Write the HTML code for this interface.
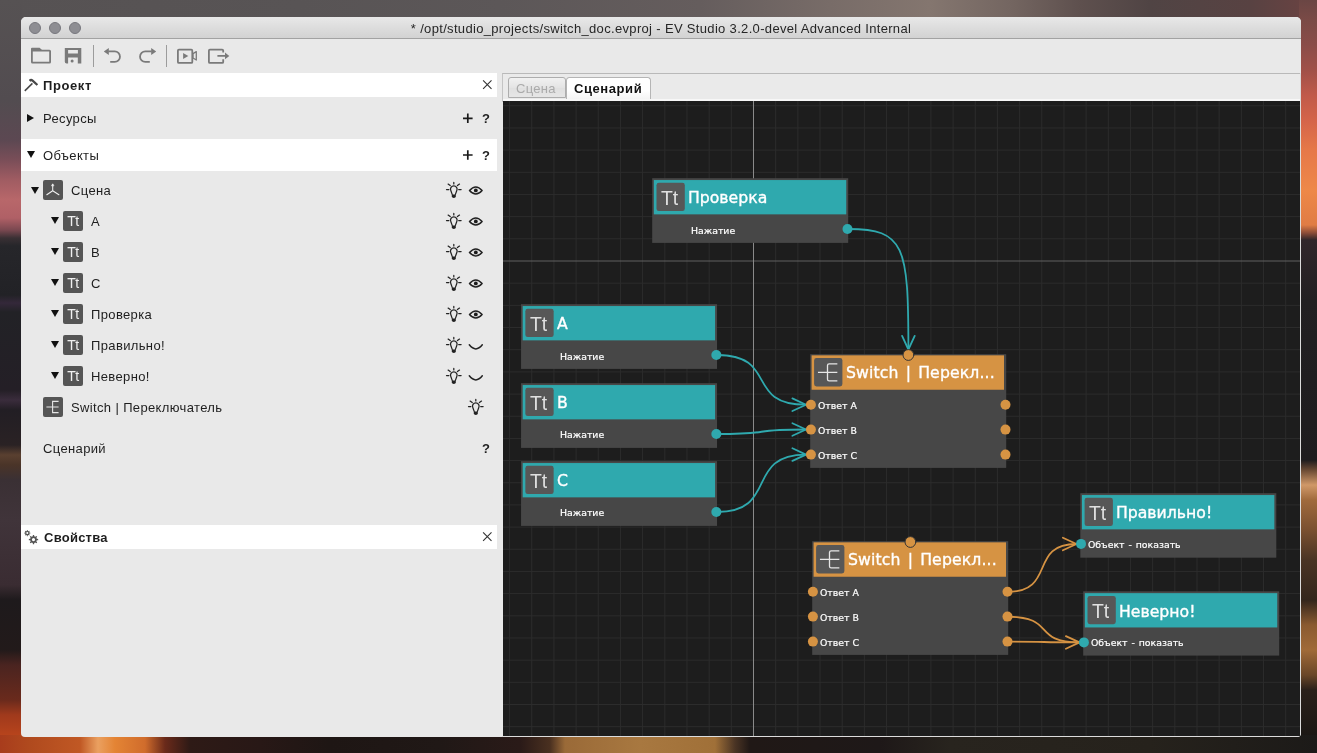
<!DOCTYPE html>
<html lang="ru">
<head>
<meta charset="utf-8">
<title>EV Studio</title>
<style>
*{box-sizing:border-box;margin:0;padding:0}
html,body{width:1317px;height:753px;overflow:hidden}
body{position:relative;font-family:"Liberation Sans",sans-serif;color:#1e1e1e;background:#2a1c1a}
.abs,#win *{position:absolute}
#bg-top{left:0;top:0;width:1317px;height:18px;background:linear-gradient(90deg,#565253 0,#585455 300px,#5c5758 500px,#655d5d 700px,#786c68 830px,#84766f 930px,#746661 1010px,#5e504e 1080px,#504444 1150px,#584242 1250px,#6c4342 1317px)}
#bg-left{left:0;top:0;width:22px;height:753px;background:linear-gradient(180deg,#565253 0,#524c50 100px,#5c4852 140px,#7a4e58 160px,#a05c62 180px,#b8676a 200px,#b06066 218px,#7a4850 230px,#3a3034 238px,#26262a 246px,#222226 295px,#34283a 303px,#222226 312px,#241f26 390px,#3a2c3c 400px,#221e24 410px,#2a2224 445px,#5a4030 455px,#4a3428 465px,#3a3034 480px,#40343a 520px,#3a2c32 585px,#1e1a1c 600px,#221a1a 650px,#4a2420 665px,#6a2a1c 700px,#a03a1c 715px,#b8441c 736px,#a84018 753px)}
#bg-right{left:1299px;top:0;width:18px;height:753px;background:linear-gradient(180deg,#6a4644 0,#7a4a46 20px,#8a4c48 45px,#a05048 70px,#c05a4a 95px,#d4644a 120px,#e67848 150px,#ee8848 190px,#e07c44 225px,#8a4c38 233px,#30262a 240px,#222022 300px,#1e1c1e 460px,#6a4a34 470px,#d09868 485px,#a06a3c 500px,#7a5030 530px,#4a3424 560px,#34261c 600px,#8a5a30 625px,#a06a38 650px,#6a4628 675px,#2a201a 690px,#161412 753px)}
#bg-bot{left:0;top:735px;width:1317px;height:18px;background:linear-gradient(90deg,#a83c1c 0,#b04a1e 30px,#c05824 80px,#eaa060 98px,#e48434 115px,#d06c2c 145px,#6a2a1a 165px,#2e1a16 190px,#281816 260px,#1e1614 330px,#201816 440px,#2a1a18 520px,#4a3020 550px,#9a6a38 565px,#a87840 640px,#a07038 715px,#4a3424 735px,#201816 750px,#1e1818 880px,#28241e 950px,#26221c 1150px,#1c1a18 1317px)}
#win{left:21px;top:17px;width:1280px;height:720px;background:#e9e9e9;border-radius:5px 5px 4px 4px;overflow:hidden}
#titlebar{left:0;top:0;width:1280px;height:22px;background:linear-gradient(180deg,#e8e8e8 0,#d2d2d2 100%);border-bottom:1px solid #a2a2a2}
#title,.lbl,.nt,.pl,.ico span,.nic{will-change:transform}
#title{left:0;top:1px;width:1280px;height:21px;line-height:22px;text-align:center;font-size:13px;letter-spacing:.33px;color:#262626;white-space:nowrap}
.tl{width:12px;height:12px;border-radius:50%;background:#8e8e93;border:1px solid #77777d;top:5px}
.tbi{top:0;left:0}
.band{left:0;width:476px;background:#fff}
.lbl{font-size:13px;line-height:16px;white-space:nowrap;color:#1e1e1e;letter-spacing:.36px}
.b{font-weight:bold;letter-spacing:.6px}
.ico{width:20px;height:20px;background:#555;border-radius:2px}
.ico span{left:0;top:0;width:20px;height:20px;line-height:20px;text-align:center;color:#f0f0f0;font-size:14px;letter-spacing:-.5px}
.tri{width:0;height:0;border-left:4px solid transparent;border-right:4px solid transparent;border-top:7px solid #111}
.trir{width:0;height:0;border-top:4.2px solid transparent;border-bottom:4.2px solid transparent;border-left:7.2px solid #111}
#canvas{left:482px;top:84px;width:797px;height:635px;background:#1d1d1d;overflow:hidden}
.node{width:196px}
.hd{left:1.9px;top:2px;width:192.2px;height:34.3px}
.teal{background:#2fa9ae}
.org{background:#d69343}
.nic{line-height:28px;height:28px;white-space:nowrap;color:#e0e0e0;font-size:19.4px;font-family:"Liberation Sans",sans-serif;letter-spacing:0;will-change:transform}
.nt{left:35.6px;-webkit-text-stroke:.35px #fff;height:24px;line-height:24px;font-family:"DejaVu Sans","Liberation Sans",sans-serif;font-size:15.7px;word-spacing:2px;color:#fff;white-space:nowrap}
.pl{font-family:"DejaVu Sans","Liberation Sans",sans-serif;font-size:9.35px;line-height:12px;color:#fff;-webkit-text-stroke:.2px #fff;white-space:nowrap}
.port{width:10px;height:10px;border-radius:50%}
</style>
</head>
<body>
<div id="bg-top" class="abs"></div><div id="bg-left" class="abs"></div><div id="bg-right" class="abs"></div><div id="bg-bot" class="abs"></div>
<div id="win" class="abs">
<div id="titlebar"></div>
<div class="tl" style="left:8px"></div>
<div class="tl" style="left:28px"></div>
<div class="tl" style="left:48px"></div>
<div id="title">* /opt/studio_projects/switch_doc.evproj - EV Studio 3.2.0-devel Advanced Internal</div>
<svg class="tbi" style="left:0;top:22px" width="300" height="34" viewBox="21 39 300 34" fill="none" stroke="#7a7a7a" stroke-width="1.8" stroke-linejoin="round" stroke-linecap="butt"><rect x="31.9" y="50.7" width="18.2" height="12" rx=".6"/><path d="M31 51 V48.7 Q31 47.7 32 47.7 H39.6 L42 50 Z" fill="#7a7a7a" stroke="none"/><path d="M64.8 48 H81.3 V63.6 H77.8 V57.6 H68.1 V63.6 H66.6 Q64.8 63.6 64.8 61.8 Z M68.1 50 V53.4 H77.9 V50 Z" fill="#7a7a7a" stroke="none" fill-rule="evenodd"/><circle cx="72.1" cy="60.9" r="1.5" fill="#7a7a7a" stroke="none"/><path d="M93.5 45 V67 M166.5 45 V67" stroke="#9c9c9c" stroke-width="1"/><path d="M108.3 51.4 H114.7 A5.25 5.25 0 0 1 114.7 61.9 H110.2"/><path d="M108.8 47.9 L103.8 51.4 L108.8 54.9 Z" fill="#7a7a7a" stroke="none"/><path d="M151.7 51.4 H145.3 A5.25 5.25 0 0 0 145.3 61.9 H149.8"/><path d="M151.2 47.9 L156.2 51.4 L151.2 54.9 Z" fill="#7a7a7a" stroke="none"/><rect x="177.9" y="49.7" width="14.4" height="13.2" rx="1"/><path d="M193 53.6 L196.3 51.6 V60 L193 58 Z" stroke-width="1.3"/><path d="M183.1 52.9 L188.3 56 L183.1 59.1 Z" fill="#7a7a7a" stroke="none"/><path d="M223.2 52.6 V50.7 Q223.2 49.7 222.2 49.7 H209.9 Q208.9 49.7 208.9 50.7 V61.9 Q208.9 62.9 209.9 62.9 H222.2 Q223.2 62.9 223.2 61.9 V59.3"/><path d="M217.4 55.9 H225.4"/><path d="M225 52.5 L229.3 55.9 L225 59.3 Z" fill="#7a7a7a" stroke="none"/></svg>
<div class="band" style="top:56px;height:24px"></div><div class="band" style="top:122px;height:32px"></div><div class="band" style="top:508px;height:24px"></div><svg style="left:0;top:56px" width="480" height="500" viewBox="21 73 480 500"><g fill="none" stroke="#484848" stroke-linecap="butt"><path d="M24.8 90.9 L32.4 83.4" stroke-width="1.5"/><path d="M29.6 80.9 Q31 79.4 32.6 80.6 L37.4 85" stroke-width="2.3"/></g><path d="M483.1 80.4 l8.4 8.4 m0 -8.4 l-8.4 8.4" stroke="#333" stroke-width="1.1" fill="none"/><path d="M483.1 532.4 l8.4 8.4 m0 -8.4 l-8.4 8.4" stroke="#333" stroke-width="1.1" fill="none"/><path d="M463 118.3 h9.6 M467.8 113.5 v9.6" stroke="#1a1a1a" stroke-width="1.7" fill="none"/><path d="M463 155.0 h9.6 M467.8 150.2 v9.6" stroke="#1a1a1a" stroke-width="1.7" fill="none"/><path d="M29.45 532.62 L30.38 532.71 L30.38 533.49 L29.45 533.58 L29.16 534.28 L29.75 535.00 L29.20 535.55 L28.48 534.96 L27.78 535.25 L27.69 536.18 L26.91 536.18 L26.82 535.25 L26.12 534.96 L25.40 535.55 L24.85 535.00 L25.44 534.28 L25.15 533.58 L24.22 533.49 L24.22 532.71 L25.15 532.62 L25.44 531.92 L24.85 531.20 L25.40 530.65 L26.12 531.24 L26.82 530.95 L26.91 530.02 L27.69 530.02 L27.78 530.95 L28.48 531.24 L29.20 530.65 L29.75 531.20 L29.16 531.92 Z M26.30 533.10 a1.00 1.00 0 1 0 2.00 0 a1.00 1.00 0 1 0 -2.00 0 Z" fill="#555" fill-rule="evenodd"/><path d="M36.82 538.86 L38.16 539.01 L38.16 540.19 L36.82 540.34 L36.37 541.42 L37.21 542.48 L36.38 543.31 L35.32 542.47 L34.24 542.92 L34.09 544.26 L32.91 544.26 L32.76 542.92 L31.68 542.47 L30.62 543.31 L29.79 542.48 L30.63 541.42 L30.18 540.34 L28.84 540.19 L28.84 539.01 L30.18 538.86 L30.63 537.78 L29.79 536.72 L30.62 535.89 L31.68 536.73 L32.76 536.28 L32.91 534.94 L34.09 534.94 L34.24 536.28 L35.32 536.73 L36.38 535.89 L37.21 536.72 L36.37 537.78 Z M31.90 539.60 a1.60 1.60 0 1 0 3.20 0 a1.60 1.60 0 1 0 -3.20 0 Z" fill="#555" fill-rule="evenodd"/><g transform="translate(453.8 190.0)"><g fill="none" stroke="#222" stroke-width="1.25" stroke-linecap="round"><path d="M-1.6 4.4 L-3 .6 A3.3 3.3 0 1 1 3 .6 L1.6 4.4"/><path d="M-2 4.4 H2 V6.3 Q2 8 0 8 Q-2 8 -2 6.3 Z" fill="#222" stroke="none"/><path d="M0 -7.6 V-6.1 M-5.7 -5.9 L-3.6 -4.4 M5.7 -5.9 L3.6 -4.4 M-7.3 -.5 H-4.9 M4.9 -.5 H7.3"/></g></g><g transform="translate(475.8 190.0)"><g fill="none" stroke="#222" stroke-width="1.5" stroke-linejoin="round"><path d="M-6.3 .45 Q0 -6.7 6.3 .45 Q0 7.6 -6.3 .45 Z"/><circle cx="0" cy=".45" r="1.9" fill="#1c1c1c" stroke="none"/></g></g><g transform="translate(453.8 221.0)"><g fill="none" stroke="#222" stroke-width="1.25" stroke-linecap="round"><path d="M-1.6 4.4 L-3 .6 A3.3 3.3 0 1 1 3 .6 L1.6 4.4"/><path d="M-2 4.4 H2 V6.3 Q2 8 0 8 Q-2 8 -2 6.3 Z" fill="#222" stroke="none"/><path d="M0 -7.6 V-6.1 M-5.7 -5.9 L-3.6 -4.4 M5.7 -5.9 L3.6 -4.4 M-7.3 -.5 H-4.9 M4.9 -.5 H7.3"/></g></g><g transform="translate(475.8 221.0)"><g fill="none" stroke="#222" stroke-width="1.5" stroke-linejoin="round"><path d="M-6.3 .45 Q0 -6.7 6.3 .45 Q0 7.6 -6.3 .45 Z"/><circle cx="0" cy=".45" r="1.9" fill="#1c1c1c" stroke="none"/></g></g><g transform="translate(453.8 252.0)"><g fill="none" stroke="#222" stroke-width="1.25" stroke-linecap="round"><path d="M-1.6 4.4 L-3 .6 A3.3 3.3 0 1 1 3 .6 L1.6 4.4"/><path d="M-2 4.4 H2 V6.3 Q2 8 0 8 Q-2 8 -2 6.3 Z" fill="#222" stroke="none"/><path d="M0 -7.6 V-6.1 M-5.7 -5.9 L-3.6 -4.4 M5.7 -5.9 L3.6 -4.4 M-7.3 -.5 H-4.9 M4.9 -.5 H7.3"/></g></g><g transform="translate(475.8 252.0)"><g fill="none" stroke="#222" stroke-width="1.5" stroke-linejoin="round"><path d="M-6.3 .45 Q0 -6.7 6.3 .45 Q0 7.6 -6.3 .45 Z"/><circle cx="0" cy=".45" r="1.9" fill="#1c1c1c" stroke="none"/></g></g><g transform="translate(453.8 283.0)"><g fill="none" stroke="#222" stroke-width="1.25" stroke-linecap="round"><path d="M-1.6 4.4 L-3 .6 A3.3 3.3 0 1 1 3 .6 L1.6 4.4"/><path d="M-2 4.4 H2 V6.3 Q2 8 0 8 Q-2 8 -2 6.3 Z" fill="#222" stroke="none"/><path d="M0 -7.6 V-6.1 M-5.7 -5.9 L-3.6 -4.4 M5.7 -5.9 L3.6 -4.4 M-7.3 -.5 H-4.9 M4.9 -.5 H7.3"/></g></g><g transform="translate(475.8 283.0)"><g fill="none" stroke="#222" stroke-width="1.5" stroke-linejoin="round"><path d="M-6.3 .45 Q0 -6.7 6.3 .45 Q0 7.6 -6.3 .45 Z"/><circle cx="0" cy=".45" r="1.9" fill="#1c1c1c" stroke="none"/></g></g><g transform="translate(453.8 314.0)"><g fill="none" stroke="#222" stroke-width="1.25" stroke-linecap="round"><path d="M-1.6 4.4 L-3 .6 A3.3 3.3 0 1 1 3 .6 L1.6 4.4"/><path d="M-2 4.4 H2 V6.3 Q2 8 0 8 Q-2 8 -2 6.3 Z" fill="#222" stroke="none"/><path d="M0 -7.6 V-6.1 M-5.7 -5.9 L-3.6 -4.4 M5.7 -5.9 L3.6 -4.4 M-7.3 -.5 H-4.9 M4.9 -.5 H7.3"/></g></g><g transform="translate(475.8 314.0)"><g fill="none" stroke="#222" stroke-width="1.5" stroke-linejoin="round"><path d="M-6.3 .45 Q0 -6.7 6.3 .45 Q0 7.6 -6.3 .45 Z"/><circle cx="0" cy=".45" r="1.9" fill="#1c1c1c" stroke="none"/></g></g><g transform="translate(453.8 345.0)"><g fill="none" stroke="#222" stroke-width="1.25" stroke-linecap="round"><path d="M-1.6 4.4 L-3 .6 A3.3 3.3 0 1 1 3 .6 L1.6 4.4"/><path d="M-2 4.4 H2 V6.3 Q2 8 0 8 Q-2 8 -2 6.3 Z" fill="#222" stroke="none"/><path d="M0 -7.6 V-6.1 M-5.7 -5.9 L-3.6 -4.4 M5.7 -5.9 L3.6 -4.4 M-7.3 -.5 H-4.9 M4.9 -.5 H7.3"/></g></g><g transform="translate(475.8 345.0)"><g fill="none" stroke="#222" stroke-width="1.5" stroke-linecap="round"><path d="M-6.5 -.2 Q0 8 6.5 -.2"/></g></g><g transform="translate(453.8 376.0)"><g fill="none" stroke="#222" stroke-width="1.25" stroke-linecap="round"><path d="M-1.6 4.4 L-3 .6 A3.3 3.3 0 1 1 3 .6 L1.6 4.4"/><path d="M-2 4.4 H2 V6.3 Q2 8 0 8 Q-2 8 -2 6.3 Z" fill="#222" stroke="none"/><path d="M0 -7.6 V-6.1 M-5.7 -5.9 L-3.6 -4.4 M5.7 -5.9 L3.6 -4.4 M-7.3 -.5 H-4.9 M4.9 -.5 H7.3"/></g></g><g transform="translate(475.8 376.0)"><g fill="none" stroke="#222" stroke-width="1.5" stroke-linecap="round"><path d="M-6.5 -.2 Q0 8 6.5 -.2"/></g></g><g transform="translate(475.8 407.0)"><g fill="none" stroke="#222" stroke-width="1.25" stroke-linecap="round"><path d="M-1.6 4.4 L-3 .6 A3.3 3.3 0 1 1 3 .6 L1.6 4.4"/><path d="M-2 4.4 H2 V6.3 Q2 8 0 8 Q-2 8 -2 6.3 Z" fill="#222" stroke="none"/><path d="M0 -7.6 V-6.1 M-5.7 -5.9 L-3.6 -4.4 M5.7 -5.9 L3.6 -4.4 M-7.3 -.5 H-4.9 M4.9 -.5 H7.3"/></g></g></svg><div class="lbl b" style="left:22.4px;top:61.0px">Проект</div><div class="lbl" style="left:22.1px;top:94.0px">Ресурсы</div><div class="lbl" style="left:22.1px;top:131.0px">Объекты</div><div class="lbl" style="left:22.1px;top:424.0px">Сценарий</div><div class="lbl b" style="left:22.6px;top:513.0px;letter-spacing:.25px">Свойства</div><div class="lbl b" style="left:461.2px;top:94.0px">?</div><div class="lbl b" style="left:461.2px;top:131.0px">?</div><div class="lbl b" style="left:461.2px;top:424.0px">?</div><div class="trir" style="left:5.9px;top:97.0px"></div><div class="tri" style="left:6.0px;top:134.2px"></div><div class="tri" style="left:10.0px;top:169.8px"></div><div class="ico" style="left:22px;top:163px"><svg width="20" height="20" viewBox="-10 -10 20 20" style="left:0;top:0"><g fill="none" stroke="#f0f0f0" stroke-width="1.05" stroke-linecap="round"><path d="M-.3 .8 V-5.6 M-.3 .8 L-6.2 4.8 M-.3 .8 L5.9 4.8"/><path d="M-1.4 -4.5 L-.3 -6.2 L.8 -4.5 Z" fill="#f0f0f0" stroke-width=".6"/></g></svg></div><div class="lbl" style="left:49.8px;top:165.5px">Сцена</div><div class="tri" style="left:30.0px;top:200.4px"></div><div class="ico" style="left:42px;top:194px"><span>Tt</span></div><div class="lbl" style="left:69.8px;top:196.5px">A</div><div class="tri" style="left:30.0px;top:231.4px"></div><div class="ico" style="left:42px;top:225px"><span>Tt</span></div><div class="lbl" style="left:69.8px;top:227.5px">B</div><div class="tri" style="left:30.0px;top:262.4px"></div><div class="ico" style="left:42px;top:256px"><span>Tt</span></div><div class="lbl" style="left:69.8px;top:258.5px">C</div><div class="tri" style="left:30.0px;top:293.4px"></div><div class="ico" style="left:42px;top:287px"><span>Tt</span></div><div class="lbl" style="left:69.8px;top:289.5px">Проверка</div><div class="tri" style="left:30.0px;top:324.4px"></div><div class="ico" style="left:42px;top:318px"><span>Tt</span></div><div class="lbl" style="left:69.8px;top:320.5px">Правильно!</div><div class="tri" style="left:30.0px;top:355.4px"></div><div class="ico" style="left:42px;top:349px"><span>Tt</span></div><div class="lbl" style="left:69.8px;top:351.5px">Неверно!</div><div class="ico" style="left:22px;top:380px"><svg width="20" height="20" viewBox="-10 -10 20 20" style="left:0;top:0"><g fill="none" stroke="#e6e6e6" stroke-width="1.1" stroke-linecap="butt"><path d="M-6.6 0 H5.6 M5.6 -5.6 H-.4 V5.6 H5.6"/></g></svg></div><div class="lbl" style="left:49.8px;top:382.5px">Switch | Переключатель</div>
<div style="left:481px;top:56px;width:799px;height:29px;background:#eaeaea;border-top:1px solid #b9b9b9;border-left:1px solid #c4c4c4"></div><div style="left:482px;top:81.5px;width:797px;height:2.5px;background:#f7f7f7"></div><div style="left:487.3px;top:60.3px;width:58.2px;height:20.4px;border:1px solid #adadad;border-radius:3px 3px 0 0;background:linear-gradient(180deg,#f1f1f1 0,#e4e4e4 50%,#e0e0e0 55%,#e6e6e6 100%)"></div><div class="lbl" style="left:494.7px;top:63.5px;color:#aaa;letter-spacing:.3px">Сцена</div><div style="left:545.3px;top:60px;width:84.3px;height:22px;border:1px solid #b5b5b5;border-bottom:none;border-radius:3.5px 3.5px 0 0;background:linear-gradient(180deg,#fff 0,#fff 60%,#f4f4f4 100%)"></div><div class="lbl b" style="left:552.9px;top:63.5px;color:#111;letter-spacing:.58px">Сценарий</div><div id="canvas"><svg style="left:0;top:0" width="797" height="635" viewBox="503 101 797 635" shape-rendering="auto"><path d="M509.57 101 V736M531.75 101 V736M553.92 101 V736M576.10 101 V736M598.27 101 V736M620.45 101 V736M642.62 101 V736M664.80 101 V736M686.98 101 V736M709.15 101 V736M731.33 101 V736M775.67 101 V736M797.85 101 V736M820.02 101 V736M842.20 101 V736M864.38 101 V736M886.55 101 V736M908.73 101 V736M930.90 101 V736M953.08 101 V736M975.25 101 V736M997.42 101 V736M1019.60 101 V736M1041.78 101 V736M1063.95 101 V736M1086.12 101 V736M1108.30 101 V736M1130.47 101 V736M1152.65 101 V736M1174.83 101 V736M1197.00 101 V736M1219.17 101 V736M1241.35 101 V736M1263.53 101 V736M1285.70 101 V736M503 105.78 H1300M503 127.95 H1300M503 150.12 H1300M503 172.30 H1300M503 194.47 H1300M503 216.65 H1300M503 238.82 H1300M503 283.18 H1300M503 305.35 H1300M503 327.52 H1300M503 349.70 H1300M503 371.88 H1300M503 394.05 H1300M503 416.23 H1300M503 438.40 H1300M503 460.58 H1300M503 482.75 H1300M503 504.93 H1300M503 527.10 H1300M503 549.28 H1300M503 571.45 H1300M503 593.62 H1300M503 615.80 H1300M503 637.98 H1300M503 660.15 H1300M503 682.33 H1300M503 704.50 H1300M503 726.67 H1300" stroke="#2c2c2c" stroke-width="1" fill="none"/><path d="M503 261.00 H1300" stroke="#606060" stroke-width="1" fill="none"/><path d="M753.50 101 V736" stroke="#8a8a8a" stroke-width="1" fill="none"/><rect x="652.20" y="178.20" width="196" height="64.70" fill="#474747"/><rect x="653.85" y="180.05" width="192.40" height="34.30" fill="#2fa9ae"/><rect x="656.50" y="182.80" width="28.3" height="28.3" rx="2.4" fill="#575757"/><rect x="521.05" y="304.20" width="196" height="64.70" fill="#474747"/><rect x="522.70" y="306.05" width="192.40" height="34.30" fill="#2fa9ae"/><rect x="525.35" y="308.80" width="28.3" height="28.3" rx="2.4" fill="#575757"/><rect x="521.05" y="383.20" width="196" height="64.70" fill="#474747"/><rect x="522.70" y="385.05" width="192.40" height="34.30" fill="#2fa9ae"/><rect x="525.35" y="387.80" width="28.3" height="28.3" rx="2.4" fill="#575757"/><rect x="521.05" y="461.20" width="196" height="64.70" fill="#474747"/><rect x="522.70" y="463.05" width="192.40" height="34.30" fill="#2fa9ae"/><rect x="525.35" y="465.80" width="28.3" height="28.3" rx="2.4" fill="#575757"/><rect x="810.20" y="354.20" width="196" height="113.70" fill="#474747"/><rect x="811.60" y="355.35" width="192.40" height="34.40" fill="#d69343"/><rect x="814.10" y="358.10" width="28.3" height="28.3" rx="2.4" fill="#575757"/><g transform="translate(828.35 372.30)"><g fill="none" stroke="#e6e6e6" stroke-width="1.3"><path d="M-10.4 0 H9 M9 -8.4 H.8 Q-.85 -8.4 -.85 -6.8 V7 Q-.85 8.6 .8 8.6 H9"/></g></g><rect x="812.20" y="541.20" width="196" height="113.70" fill="#474747"/><rect x="813.60" y="542.35" width="192.40" height="34.40" fill="#d69343"/><rect x="816.10" y="545.10" width="28.3" height="28.3" rx="2.4" fill="#575757"/><g transform="translate(830.35 559.30)"><g fill="none" stroke="#e6e6e6" stroke-width="1.3"><path d="M-10.4 0 H9 M9 -8.4 H.8 Q-.85 -8.4 -.85 -6.8 V7 Q-.85 8.6 .8 8.6 H9"/></g></g><rect x="1080.30" y="493.20" width="196" height="64.50" fill="#474747"/><rect x="1081.95" y="495.05" width="192.40" height="34.30" fill="#2fa9ae"/><rect x="1084.60" y="497.80" width="28.3" height="28.3" rx="2.4" fill="#575757"/><rect x="1083.20" y="591.30" width="196" height="64.30" fill="#474747"/><rect x="1084.85" y="593.15" width="192.40" height="34.30" fill="#2fa9ae"/><rect x="1087.50" y="595.90" width="28.3" height="28.3" rx="2.4" fill="#575757"/></svg><div class="node" style="left:149.20px;top:77.20px;height:64.7px"><div class="nic" style="left:9.1px;top:5.4px">Tt</div><div class="nt" style="top:8.27px">Проверка</div><div class="pl" style="left:39.2px;top:46.55px">Нажатие</div></div><div class="node" style="left:18.05px;top:203.20px;height:64.7px"><div class="nic" style="left:9.1px;top:5.4px">Tt</div><div class="nt" style="top:7.47px">A</div><div class="pl" style="left:39.2px;top:46.55px">Нажатие</div></div><div class="node" style="left:18.05px;top:282.20px;height:64.7px"><div class="nic" style="left:9.1px;top:5.4px">Tt</div><div class="nt" style="top:7.47px">B</div><div class="pl" style="left:39.2px;top:45.55px">Нажатие</div></div><div class="node" style="left:18.05px;top:360.20px;height:64.7px"><div class="nic" style="left:9.1px;top:5.4px">Tt</div><div class="nt" style="top:7.47px">C</div><div class="pl" style="left:39.2px;top:45.55px">Нажатие</div></div><div class="node" style="left:307.20px;top:253.20px;height:113.7px"><div class="nt" style="top:7.07px;letter-spacing:.12px">Switch | Перекл...</div><div class="pl" style="left:7.9px;top:45.55px">Ответ A</div><div class="pl" style="left:7.9px;top:70.45px">Ответ B</div><div class="pl" style="left:7.9px;top:95.45px">Ответ C</div></div><div class="node" style="left:309.20px;top:440.20px;height:113.7px"><div class="nt" style="top:7.07px;letter-spacing:.12px">Switch | Перекл...</div><div class="pl" style="left:7.9px;top:45.55px">Ответ A</div><div class="pl" style="left:7.9px;top:70.45px">Ответ B</div><div class="pl" style="left:7.9px;top:95.45px">Ответ C</div></div><div class="node" style="left:577.30px;top:392.20px;height:64.5px"><div class="nic" style="left:9.1px;top:5.4px">Tt</div><div class="nt" style="top:7.47px">Правильно!</div><div class="pl" style="left:7.9px;top:45.75px;word-spacing:.95px">Объект - показать</div></div><div class="node" style="left:580.20px;top:490.30px;height:64.3px"><div class="nic" style="left:9.1px;top:5.4px">Tt</div><div class="nt" style="top:8.37px">Неверно!</div><div class="pl" style="left:7.9px;top:46.05px;word-spacing:.95px">Объект - показать</div></div><svg style="left:0;top:0" width="797" height="635" viewBox="503 101 797 635" fill="none" stroke-width="1.8" stroke-linecap="round" stroke-linejoin="round"><g stroke="#2fa9ae"><path d="M848.0 229.0 C905.0 229.0 908.4 246.0 908.4 349.5"/><path d="M902.1 335.9 L908.4 349.5 L914.7 335.9"/><path d="M717.0 355.0 C779.0 355.0 744.0 404.7 806.0 404.7"/><path d="M792.4 411.0 L806.0 404.7 L792.4 398.4"/><path d="M717.0 434.0 C779.0 434.0 744.0 429.5 806.0 429.5"/><path d="M792.4 435.8 L806.0 429.5 L792.4 423.2"/><path d="M717.0 512.0 C779.0 512.0 744.0 454.6 806.0 454.6"/><path d="M792.4 460.9 L806.0 454.6 L792.4 448.3"/></g><g stroke="#d69343"><path d="M1007.0 592.0 C1057.0 592.0 1028.0 544.0 1076.5 544.0"/><path d="M1062.9 550.3 L1076.5 544.0 L1062.9 537.7"/><path d="M1007.0 616.7 C1057.0 616.7 1031.0 642.4 1079.5 642.4"/><path d="M1007.0 641.6 C1057.0 641.6 1031.0 642.4 1079.5 642.4"/><path d="M1065.9 648.7 L1079.5 642.4 L1065.9 636.1"/></g><circle cx="847.50" cy="229.00" r="5" fill="#2fa9ae"/><circle cx="716.35" cy="355.00" r="5" fill="#2fa9ae"/><circle cx="716.35" cy="434.00" r="5" fill="#2fa9ae"/><circle cx="716.35" cy="512.00" r="5" fill="#2fa9ae"/><circle cx="810.90" cy="404.70" r="5" fill="#d69343"/><circle cx="810.90" cy="429.60" r="5" fill="#d69343"/><circle cx="810.90" cy="454.60" r="5" fill="#d69343"/><circle cx="1005.50" cy="404.70" r="5" fill="#d69343"/><circle cx="1005.50" cy="429.60" r="5" fill="#d69343"/><circle cx="1005.50" cy="454.60" r="5" fill="#d69343"/><circle cx="908.40" cy="355.00" r="5.4" fill="#d69343" stroke="#333" stroke-width="1"/><circle cx="812.90" cy="591.70" r="5" fill="#d69343"/><circle cx="812.90" cy="616.60" r="5" fill="#d69343"/><circle cx="812.90" cy="641.60" r="5" fill="#d69343"/><circle cx="1007.50" cy="591.70" r="5" fill="#d69343"/><circle cx="1007.50" cy="616.60" r="5" fill="#d69343"/><circle cx="1007.50" cy="641.60" r="5" fill="#d69343"/><circle cx="910.40" cy="542.00" r="5.4" fill="#d69343" stroke="#333" stroke-width="1"/><circle cx="1081.00" cy="543.90" r="5" fill="#2fa9ae"/><circle cx="1083.90" cy="642.40" r="5" fill="#2fa9ae"/></svg></div><div style="left:1279px;top:56px;width:1px;height:664px;background:#dcdcdc"></div><div style="left:481px;top:719px;width:799px;height:1px;background:#dcdcdc"></div>
</div>
</body>
</html>
